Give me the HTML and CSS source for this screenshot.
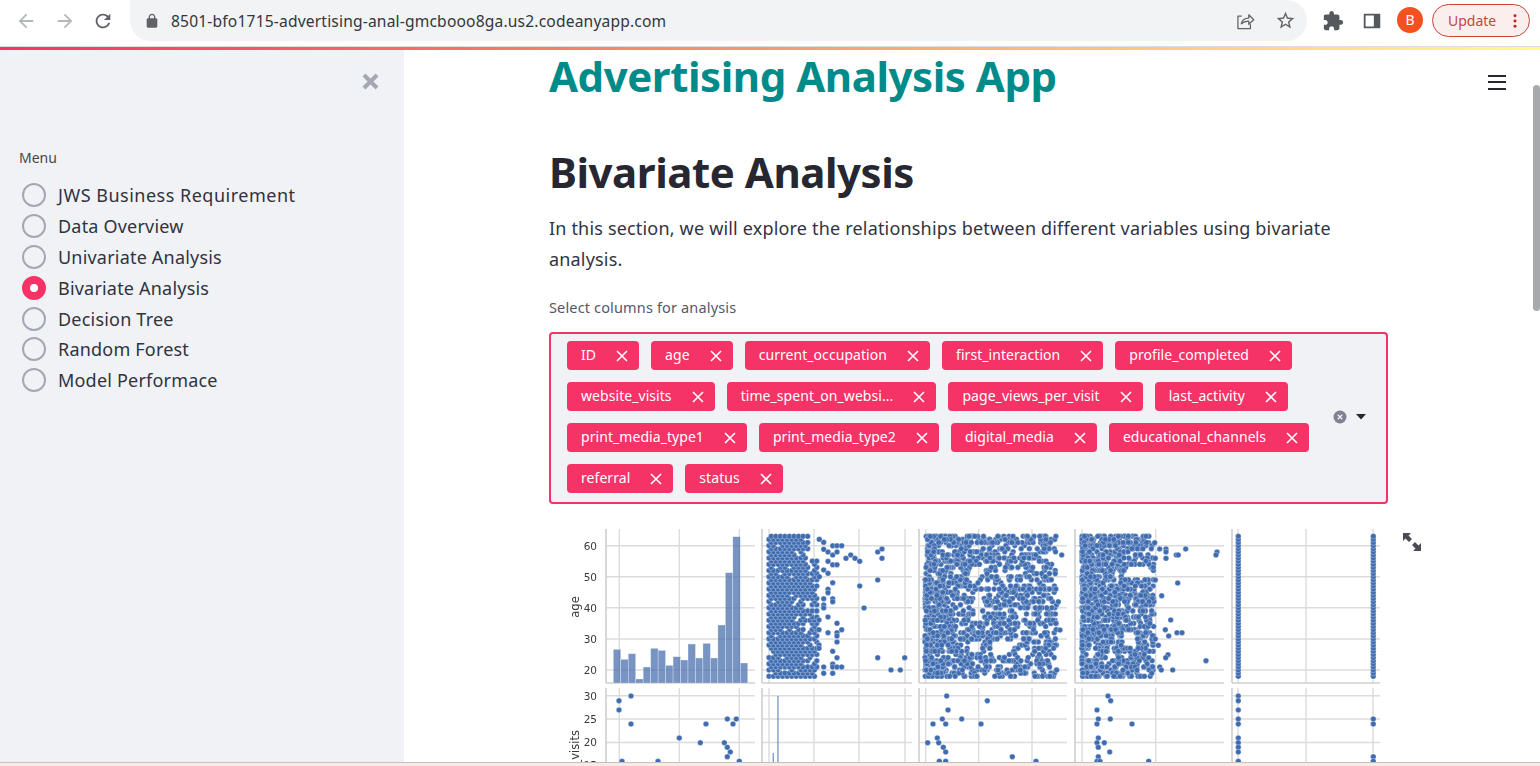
FILE: index.html
```html
<!DOCTYPE html>
<html lang="en">
<head>
<meta charset="utf-8">
<title>Advertising Analysis App</title>
<link rel="stylesheet" href="styles.css">
</head>
<body>
<header class="toolbar">
  <button class="nav-btn first"><svg class="ic muted" viewBox="0 0 24 24"><path d="M20 11H7.83l5.59-5.59L12 4l-8 8 8 8 1.41-1.41L7.83 13H20v-2z"/></svg></button>
  <button class="nav-btn"><svg class="ic muted" viewBox="0 0 24 24"><path d="M12 4l-1.41 1.41L16.17 11H4v2h12.17l-5.58 5.59L12 20l8-8z"/></svg></button>
  <button class="nav-btn"><svg class="ic" viewBox="0 0 24 24"><path d="M17.65 6.35C16.2 4.9 14.21 4 12 4c-4.42 0-7.99 3.58-7.99 8s3.57 8 7.99 8c3.73 0 6.84-2.55 7.73-6h-2.08c-.82 2.33-3.04 4-5.65 4-3.31 0-6-2.69-6-6s2.69-6 6-6c1.66 0 3.14.69 4.22 1.78L13 11h7V4l-2.35 2.35z"/></svg></button>
  <div class="omnibox">
    <svg class="lock" viewBox="0 0 24 24"><path d="M18 8h-1V6c0-2.76-2.24-5-5-5S7 3.24 7 6v2H6c-1.1 0-2 .9-2 2v10c0 1.1.9 2 2 2h12c1.1 0 2-.9 2-2V10c0-1.1-.9-2-2-2zM9 6c0-1.66 1.34-3 3-3s3 1.34 3 3v2H9V6z"/></svg>
    <span class="url">8501-bfo1715-advertising-anal-gmcbooo8ga.us2.codeanyapp.com</span>
    <span class="omni-spacer"></span>
    <svg class="ic share" viewBox="0 0 24 24"><path d="M8 6H3.5v15h15v-5M7.5 15.5c1-4.5 4.5-7 9-7V4.5l6 6-6 5.5v-4c-3.5 0-6.500 1-9 3.500z" fill="none" stroke="currentColor" stroke-width="1.5" stroke-linejoin="round"/></svg>
    <svg class="ic star" viewBox="0 0 24 24"><path d="M22 9.24l-7.19-.62L12 2 9.19 8.63 2 9.24l5.46 4.73L5.82 21 12 17.27 18.18 21l-1.63-7.03L22 9.24zM12 15.4l-3.76 2.27 1-4.28-3.32-2.88 4.38-.38L12 6.1l1.71 4.04 4.38.38-3.32 2.88 1 4.28L12 15.4z"/></svg>
  </div>
  <button class="ext-btn first-ext"><svg class="ic dark" viewBox="0 0 24 24"><path d="M20.5 11H19V7c0-1.1-.9-2-2-2h-4V3.5C13 2.12 11.88 1 10.5 1S8 2.12 8 3.500V5H4c-1.100 0-1.990.9-1.990 2v3.800H3.500c1.490 0 2.700 1.210 2.700 2.700s-1.210 2.700-2.700 2.700H2V20c0 1.100.9 2 2 2h3.800v-1.500c0-1.490 1.210-2.700 2.700-2.700 1.490 0 2.700 1.210 2.700 2.700V22H17c1.100 0 2-.9 2-2v-4h1.500c1.380 0 2.500-1.120 2.500-2.500S21.880 11 20.500 11z"/></svg></button>
  <button class="ext-btn"><svg class="ic dark" viewBox="0 0 24 24"><path fill-rule="evenodd" d="M3 4h18v16H3zM5 6v12h9V6z"/></svg></button>
  <span class="avatar">B</span>
  <button class="update"><span>Update</span><svg class="kebab" viewBox="0 0 4 16"><circle cx="2" cy="2" r="1.700"/><circle cx="2" cy="8" r="1.700"/><circle cx="2" cy="14" r="1.700"/></svg></button>
</header>
<div class="decoration"></div>
<div class="app">
  <aside class="sidebar">
    <svg class="sidebar-close" viewBox="0 0 16 16"><path d="M2.500 2.500l11 11M13.500 2.500l-11 11"/></svg>
    <p class="menu-label">Menu</p>
    <ul class="radio-list">
      <li class="radio-item wide"><span class="radio"></span>JWS Business Requirement</li>
      <li class="radio-item"><span class="radio"></span>Data Overview</li>
      <li class="radio-item"><span class="radio"></span>Univariate Analysis</li>
      <li class="radio-item"><span class="radio on"></span>Bivariate Analysis</li>
      <li class="radio-item"><span class="radio"></span>Decision Tree</li>
      <li class="radio-item"><span class="radio"></span>Random Forest</li>
      <li class="radio-item"><span class="radio"></span>Model Performace</li>
    </ul>
  </aside>
  <main class="main">
    <div class="hamburger"><i></i><i></i><i></i></div>
    <div class="scroll-thumb"></div>
    <h1 class="app-title">Advertising Analysis App</h1>
    <h2 class="section-title">Bivariate Analysis</h2>
    <p class="intro">In this section, we will explore the relationships between different variables using bivariate analysis.</p>
    <label class="field-label">Select columns for analysis</label>
    <div class="multiselect">
      <div class="chips">
        <span class="chip">ID<svg viewBox="0 0 12 12"><path d="M1 1l10 10M11 1L1 11"/></svg></span>
        <span class="chip">age<svg viewBox="0 0 12 12"><path d="M1 1l10 10M11 1L1 11"/></svg></span>
        <span class="chip">current_occupation<svg viewBox="0 0 12 12"><path d="M1 1l10 10M11 1L1 11"/></svg></span>
        <span class="chip">first_interaction<svg viewBox="0 0 12 12"><path d="M1 1l10 10M11 1L1 11"/></svg></span>
        <span class="chip">profile_completed<svg viewBox="0 0 12 12"><path d="M1 1l10 10M11 1L1 11"/></svg></span>
        <span class="chip">website_visits<svg viewBox="0 0 12 12"><path d="M1 1l10 10M11 1L1 11"/></svg></span>
        <span class="chip">time_spent_on_websi...<svg viewBox="0 0 12 12"><path d="M1 1l10 10M11 1L1 11"/></svg></span>
        <span class="chip">page_views_per_visit<svg viewBox="0 0 12 12"><path d="M1 1l10 10M11 1L1 11"/></svg></span>
        <span class="chip">last_activity<svg viewBox="0 0 12 12"><path d="M1 1l10 10M11 1L1 11"/></svg></span>
        <span class="chip">print_media_type1<svg viewBox="0 0 12 12"><path d="M1 1l10 10M11 1L1 11"/></svg></span>
        <span class="chip">print_media_type2<svg viewBox="0 0 12 12"><path d="M1 1l10 10M11 1L1 11"/></svg></span>
        <span class="chip">digital_media<svg viewBox="0 0 12 12"><path d="M1 1l10 10M11 1L1 11"/></svg></span>
        <span class="chip">educational_channels<svg viewBox="0 0 12 12"><path d="M1 1l10 10M11 1L1 11"/></svg></span>
        <span class="chip">referral<svg viewBox="0 0 12 12"><path d="M1 1l10 10M11 1L1 11"/></svg></span>
        <span class="chip">status<svg viewBox="0 0 12 12"><path d="M1 1l10 10M11 1L1 11"/></svg></span>
      </div>
      <div class="ms-controls">
        <svg class="ms-clear" viewBox="0 0 14 14"><circle cx="7" cy="7" r="6.500"/><path d="M4.800 4.800l4.400 4.400M9.200 4.800l-4.400 4.400"/></svg>
        <svg class="ms-caret" viewBox="0 0 10 6"><path d="M0 0h10L5 5.500z"/></svg>
      </div>
    </div>
    <div class="plot-wrap">
      <svg id="plot" class="plot" viewBox="549 520 839 242" xmlns="http://www.w3.org/2000/svg"></svg>
      <svg class="expand" viewBox="0 0 18 18"><path d="M0 0h8L5.500 2.500 9 6 6 9 2.500 5.500 0 8zM18 18h-8l2.500-2.500L9 12l3-3 3.500 3.500L18 10z"/></svg>
    </div>
  </main>
</div>
<div class="window-edge"></div>
<script src="plot.js"></script>
</body>
</html>
```
FILE: styles.css
```css
* { box-sizing: border-box; }
html, body { height: 100%; }
body {
  margin: 0;
  height: 766px;
  overflow: hidden;
  display: flex;
  flex-direction: column;
  background: #fff;
  font-family: "Noto Sans", "Open Sans", sans-serif;
  color: #262730;
}
button { border: 0; background: none; padding: 0; font: inherit; }
h1, h2, p, ul { margin: 0; padding: 0; }

.toolbar {
  height: 47px;
  flex: none;
  display: flex;
  align-items: flex-start;
  background: #fff;
  border-bottom: 1px solid #dcdde0;
  padding-left: 7px;
}
.nav-btn { width: 38.500px; height: 41px; display: flex; align-items: center; justify-content: center; }
.ic { width: 22px; height: 22px; fill: #5f6368; color: #5f6368; }
.ic.muted { fill: #b4b7bb; }
.ic.dark { fill: #55585c; }
.omnibox {
  margin-left: 7.500px;
  width: 1177px;
  height: 41px;
  border-radius: 0 21px 21px 21px;
  background: #f1f3f4;
  display: flex;
  align-items: center;
  padding-left: 14px;
}
.lock { width: 16px; height: 16px; fill: #5f6368; }
.url { margin-left: 11px; font-size: 15.600px; color: #33363a; letter-spacing: .17px; white-space: nowrap; }
.omni-spacer { flex: 1; }
.share { width: 20px; height: 20px; margin-right: 20px; }
.star { width: 21px; height: 21px; margin-right: 11px; }
.ext-btn { width: 39px; height: 41px; display: flex; align-items: center; justify-content: center; }
.first-ext { margin-left: 6px; }
.avatar {
  margin: 7px 0 0 6px;
  width: 26px;
  height: 26px;
  border-radius: 50%;
  background: #f4511e;
  color: #fff;
  font-size: 14px;
  line-height: 26px;
  text-align: center;
}
.update {
  margin: 4px 0 0 9px;
  width: 98px;
  height: 33px;
  border: 1.500px solid #c9403a;
  border-radius: 17px;
  background: #fbefed;
  color: #c5453f;
  font-size: 14px;
  display: flex;
  align-items: center;
  padding-left: 15px;
}
.kebab { width: 4px; height: 14px; margin-left: 17px; fill: #c5221f; }

.decoration {
  height: 2.500px;
  flex: none;
  background: linear-gradient(90deg, #f63366, #fffd80);
}
.app { flex: 1; min-height: 0; display: flex; }
.window-edge { height: 4px; flex: none; border-top: 1px solid #c9bfbd; background: #f7ebe8; }

.sidebar {
  position: relative;
  flex: none;
  width: 404px;
  background: #f0f2f6;
  padding: 98px 0 0 19px;
}
.sidebar-close {
  position: absolute;
  left: 361px;
  top: 22px;
  width: 19px;
  height: 19px;
  fill: none;
  stroke: #a3a8b4;
  stroke-width: 3.400px;
}
.menu-label { font-size: 14px; line-height: 20px; color: #45474f; }
.radio-list { list-style: none; margin: 12.500px 0 0 3px; }
.radio-item {
  display: flex;
  align-items: center;
  height: 30.800px;
  font-size: 18px;
  letter-spacing: .2px;
  color: #31333f;
  white-space: nowrap;
}
.radio-item.wide { letter-spacing: .5px; }
.radio {
  width: 24px;
  height: 24px;
  margin-right: 12px;
  border: 2.500px solid #a3a8b4;
  border-radius: 50%;
  background: #f0f2f6;
  flex: none;
}
.radio.on { border: 8px solid #f63366; background: #fff; }

.main {
  position: relative;
  flex: 1;
  min-width: 0;
  padding: 0 152px 0 145px;
}
.hamburger {
  position: absolute;
  left: 1084px;
  top: 25px;
  width: 18px;
  display: flex;
  flex-direction: column;
  gap: 4.500px;
}
.hamburger i { display: block; height: 2px; background: #262730; }
.scroll-thumb {
  position: absolute;
  right: 0;
  top: 35px;
  width: 7px;
  height: 226px;
  border-radius: 4px;
  background: #a8a9ad;
}
.app-title {
  font-size: 42px;
  line-height: 52px;
  font-weight: 700;
  letter-spacing: -.45px;
  color: #008b8b;
  white-space: nowrap;
}
.section-title {
  margin-top: 42px;
  font-size: 42px;
  line-height: 56px;
  font-weight: 700;
  letter-spacing: -.45px;
  color: #262730;
  white-space: nowrap;
}
.intro { margin-top: 13px; font-size: 18px; line-height: 31px; letter-spacing: .18px; color: #31333f; }
.field-label { display: block; margin-top: 22px; font-size: 14.500px; line-height: 20px; letter-spacing: .15px; color: #555867; }
.multiselect {
  margin-top: 15px;
  height: 172px;
  border: 2px solid #f63366;
  border-radius: 4px;
  background: #f0f2f6;
  display: flex;
  align-items: center;
  padding: 7.500px 20px 8px 16px;
}
.chips { flex: 1; display: flex; flex-wrap: wrap; gap: 12px; align-content: flex-start; align-self: flex-start; }
.chip {
  height: 29px;
  display: inline-flex;
  align-items: center;
  padding: 0 11px 2px 14px;
  border-radius: 4px;
  background: #f63366;
  color: #fff;
  font-size: 14px;
  letter-spacing: .06px;
  white-space: nowrap;
}
.chip svg { width: 12px; height: 12px; margin: 2px 0 0 20px; fill: none; stroke: #fff; stroke-width: 1.600px; }
.ms-controls { display: flex; align-items: center; gap: 9px; flex: none; margin-left: 8px; }
.ms-clear { width: 14px; height: 14px; }
.ms-clear circle { fill: #7f8290; }
.ms-clear path { fill: none; stroke: #f0f2f6; stroke-width: 1.300px; }
.ms-caret { width: 10px; height: 6px; fill: #262730; }

.plot-wrap { position: relative; margin-top: 16.500px; width: 839px; height: 242px; }
.plot { display: block; width: 839px; height: 242px; filter: blur(.35px); }
.expand { position: absolute; left: 854px; top: 13px; width: 18px; height: 18px; fill: #4a4c55; overflow: visible; }
```
FILE: plot.js
```js
(function () {
  var svg = document.getElementById('plot');
  var NS = 'http://www.w3.org/2000/svg';
  var seed = 20230517;
  function rnd() { seed = (seed * 1664525 + 1013904223) % 4294967296; return seed / 4294967296; }
  function add(tag, attrs, parent, text) {
    var e = document.createElementNS(NS, tag);
    for (var k in attrs) e.setAttribute(k, attrs[k]);
    if (text) e.textContent = text;
    (parent || svg).appendChild(e);
    return e;
  }
  var cols = [[606, 755], [762, 912], [919, 1067], [1075, 1224], [1232, 1380]];
  var rows = [[529, 683], [688, 772]];
  var vGrid = [[619.3, 679.3, 739.3], [769, 814, 859, 905], [925.7, 978.7, 1032], [1082, 1155.7], [1238, 1306, 1373]];
  var hGrid = [[545.7, 576.7, 607.8, 639, 670], [695.7, 719, 742.5, 765.5]];
  var grid = add('g', { stroke: '#dcdcdc', 'stroke-width': 1.4 });
  var spine = add('g', { stroke: '#cfcfcf', 'stroke-width': 1.6 });
  rows.forEach(function (r, ri) {
    cols.forEach(function (c, ci) {
      vGrid[ci].forEach(function (x) { add('line', { x1: x, x2: x, y1: r[0], y2: r[1] }, grid); });
      hGrid[ri].forEach(function (y) { add('line', { x1: c[0], x2: c[1], y1: y, y2: y }, grid); });
      add('line', { x1: c[0], x2: c[0], y1: r[0], y2: r[1] }, spine);
      add('line', { x1: c[0], x2: c[1], y1: r[1], y2: r[1] }, spine);
    });
  });

  var labels = add('g', { 'font-family': 'DejaVu Sans, sans-serif', 'font-size': 10.5, fill: '#3a3a3a' });
  [['60', 545.7], ['50', 576.7], ['40', 607.8], ['30', 639], ['20', 670], ['30', 695.7], ['25', 719], ['20', 742.5], ['15', 765.5]].forEach(function (t) {
    add('text', { x: 597, y: t[1] + 3.9, 'text-anchor': 'end' }, labels, t[0]);
  });
  add('text', { transform: 'translate(579 607) rotate(-90)', 'text-anchor': 'middle', 'font-size': 11.5 }, labels, 'age');
  add('text', { transform: 'translate(579 770) rotate(-90)', 'text-anchor': 'middle', 'font-size': 11.5 }, labels, 'website_visits');

  var tops = [388, 418, 401, 477, 441, 385, 391, 436, 410, 420, 372, 414, 370, 414, 315, 158, 50, 429];
  var bars = add('g', { fill: '#4c72b0', 'fill-opacity': 0.76, stroke: '#ffffff', 'stroke-opacity': 0.6, 'stroke-width': 0.5 });
  tops.forEach(function (t, i) {
    var y = 520 + t / 3;
    add('rect', { x: 613.3 + i * 7.47, y: y, width: 7.47, height: 683 - y }, bars);
  });
  var hist2 = add('g', { fill: '#4c72b0', 'fill-opacity': 0.75 });
  add('rect', { x: 777.3, y: 696, width: 1.3, height: 70 }, hist2);
  add('rect', { x: 772.6, y: 753, width: 1.3, height: 13 }, hist2);

  var dots = add('g', { fill: '#3f6cb0', stroke: '#ffffff', 'stroke-opacity': 0.7, 'stroke-width': 0.45 });
  function dot(x, y) { add('circle', { cx: x.toFixed(1), cy: y.toFixed(1), r: 2.8 }, dots); }
  function ageY(a) { return 670 - 3.11 * (a - 20); }
  function z6(p) { dot(560 + p[0] / 3, 520 + p[1] / 3); }
  function z7(p) { dot(910 + p[0] / 3, 520 + p[1] / 3); }
  var a, i, x;

  // column 2, row 1
  for (a = 18; a <= 63; a++) {
    for (i = 0; i <= 10; i++) {
      if (a > 55 && i > 8) continue;
      if (rnd() < (i < 8 ? 0.94 : 0.7)) dot(769 + i * 4.55 + (a % 2) * 2.27, ageY(a));
    }
  }
  [[778,58],[791,67],[818,77],[831,77],[845,77],[858,115],[872,105],[885,115],[899,124],[953,96],[966,87],[966,115],[953,180],[899,198],[818,188],[912,264],[804,291],[831,310],[845,329],[804,338],[831,338],[831,348],[831,366],[818,394],[831,413],[953,413],[1034,413],[818,432],[791,441],[818,441],[831,441],[845,441],[993,450],[1021,450],[791,460],[818,460],[777,375],[777,385],[777,300],[777,329],[791,255],[791,264],[818,236],[818,245],[791,236],[804,208],[804,218],[778,170],[791,150],[804,160],[791,88],[804,96],[818,105],[831,96],[804,124],[818,134],[831,134]].forEach(z6);

  // column 3, row 1
  function inHole3(x, y) {
    return (x > 972 && x < 982 && y > 565 && y < 578) || (x > 973 && x < 982 && y > 590 && y < 622) ||
      (x > 992 && x < 1012 && y > 640 && y < 652) || (x > 968 && x < 982 && y > 640 && y < 652) ||
      (x > 1000 && x < 1008 && y > 572 && y < 582) || (x > 983 && x < 993 && y > 605 && y < 613);
  }
  for (i = 0; i < 1500; i++) {
    x = 925 + 132 * Math.pow(rnd(), 1.35);
    a = 18 + Math.floor(rnd() * 46);
    if (!inHole3(x, ageY(a))) dot(x, ageY(a));
  }
  [[455,105],[445,245],[437,310],[450,330],[440,450]].forEach(z7);

  // column 4, row 1
  function inHole4(x, y) {
    return (x > 1128 && x < 1150 && y > 565 && y < 578) || (x > 1090 && x < 1095 && y > 640 && y < 660) ||
      (x > 1122 && x < 1136 && y > 632 && y < 648);
  }
  for (i = 0; i < 1250; i++) {
    x = 1082 + 72 * Math.pow(rnd(), 1.5);
    a = 18 + Math.floor(rnd() * 46);
    if (!inHole4(x, ageY(a))) dot(x, ageY(a));
  }
  [[734,68],[749,87],[768,87],[768,96],[827,87],[921,96],[918,105],[799,105],[805,105],[768,115],[736,115],[736,180],[803,189],[755,227],[725,272],[782,300],[766,329],[801,338],[816,338],[776,348],[736,357],[745,376],[685,385],[704,366],[774,404],[767,413],[888,422],[749,441],[754,450],[788,450],[725,460],[716,413]].forEach(z7);

  // column 5, row 1
  for (a = 18; a <= 63; a++) { dot(1238.3, ageY(a)); dot(1373.3, ageY(a)); }

  // row 2
  [[177,542],[177,570],[213,528],[213,612],[502,597],[529,597],[519,612],[438,612],[358,654],[421,668],[493,668],[502,682],[511,696],[502,710],[186,724],[294,724],[538,724]].forEach(z6);
  [[110,528],[232,542],[114,570],[97,597],[155,597],[69,612],[107,612],[213,612],[82,654],[53,668],[86,668],[100,682],[107,696],[307,710],[88,724],[107,724],[378,724],
   [594,528],[602,542],[561,570],[565,597],[601,597],[561,612],[666,612],[565,654],[561,668],[583,668],[565,682],[599,696],[565,710],[561,724],[570,724],[716,724]].forEach(z7);
  [528,542,570,597,612,654,668,682,696,724].forEach(function (y) { z7([985, y]); });
  [597,612,710,724].forEach(function (y) { z7([1390, y]); });
})();
```
